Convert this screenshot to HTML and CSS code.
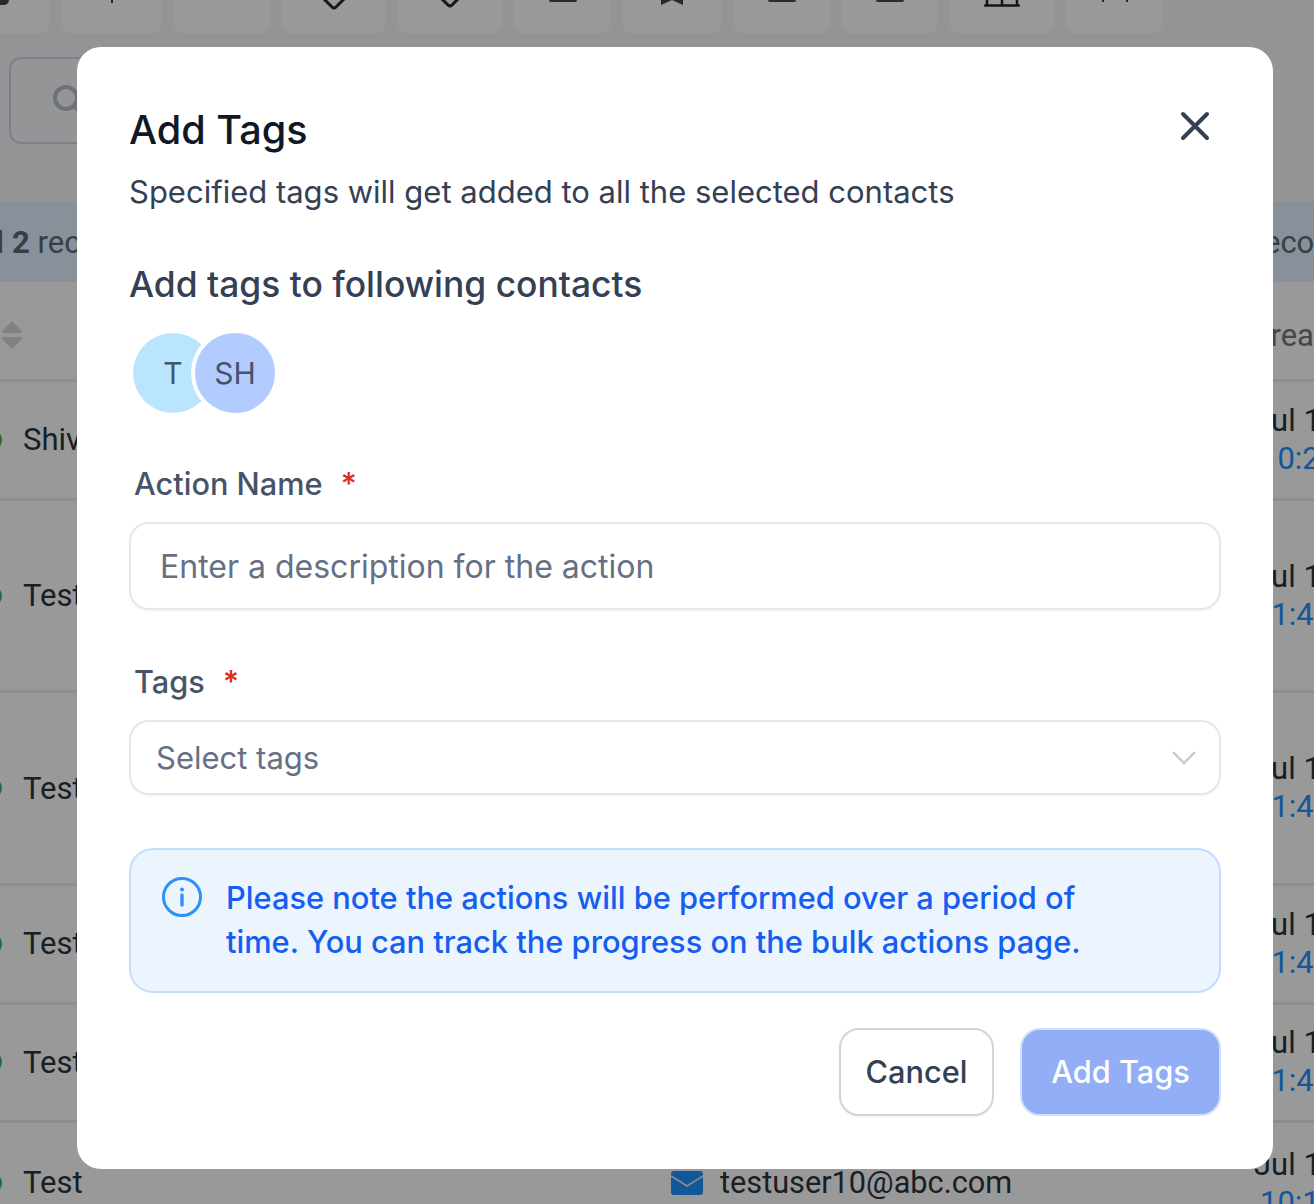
FILE: index.html
```html
<!DOCTYPE html>
<html lang="en">
<head>
  <meta charset="UTF-8">
  <meta name="viewport" content="width=device-width, initial-scale=1.0">
  <title>Contacts - Add Tags</title>
  <link rel="stylesheet" href="styles.css">
</head>
<body>
  <div class="page">
    <div class="toolbar">
      <div class="tool tool-0"><span class="frag-blob"></span></div>
      <div class="tool tool-1"><span class="frag-tick"></span></div>
      <div class="tool tool-2"></div>
      <div class="tool tool-3">
        <svg width="24" height="10" viewBox="0 0 24 10"><path d="M1 -2 L10 7 Q12 9 14 7 L23 -2" fill="none" stroke="#1f2a3c" stroke-width="3"/></svg>
      </div>
      <div class="tool tool-4">
        <svg width="20" height="8" viewBox="0 0 20 8"><path d="M1 -2 L8 5 Q10 7 12 5 L19 -2" fill="none" stroke="#1f2a3c" stroke-width="3"/></svg>
      </div>
      <div class="tool tool-5"><span class="frag-bar"></span></div>
      <div class="tool tool-6">
        <svg width="22" height="5" viewBox="0 0 22 5"><path d="M0 0 H22 V5 L11 0 L0 5 Z" fill="#3a4654"/></svg>
      </div>
      <div class="tool tool-7"><span class="frag-bar"></span></div>
      <div class="tool tool-8"><span class="frag-bar"></span></div>
      <div class="tool tool-9">
        <svg width="36" height="7" viewBox="0 0 36 7"><path d="M3 0 V5 M18 0 V5 M33 0 V5 M1 5.5 H35" fill="none" stroke="#1f2630" stroke-width="2.5" stroke-linecap="round"/></svg>
      </div>
      <div class="tool tool-10">
        <svg width="28" height="3" viewBox="0 0 28 3"><path d="M1 0 H3 V2 H1 Z M25 0 H27 V2 H25 Z" fill="#3a4654"/></svg>
      </div>
    </div>

    <div class="search">
      <svg class="search-icon" width="32" height="32" viewBox="0 0 32 32"><circle cx="14" cy="14" r="11" fill="none" stroke="#b8bcc4" stroke-width="4"/><path d="M22 22 L30 30" stroke="#b8bcc4" stroke-width="4"/></svg>
    </div>

    <div class="banner">
      <span class="banner-left">All <b>2</b> records</span>
      <span class="banner-right">records</span>
    </div>

    <div class="table-head">
      <svg class="sort" width="22" height="30" viewBox="0 0 24 32" preserveAspectRatio="none"><path d="M12 1 L23 12 Q23 14 21 14 H3 Q1 14 1 12 Z M3 18 H21 Q23 18 23 20 L12 31 L1 20 Q1 18 3 18 Z" fill="#d6d8dc"/></svg>
      <span class="head-date">Created</span>
    </div>

    <div class="row row-short">
      <div class="name"><span class="dot dot-green"></span>Shivam</div>
      <div class="date">Jul 19<span class="time">10:25</span></div>
    </div>
    <div class="row row-tall">
      <div class="name"><span class="dot dot-teal"></span>Test</div>
      <div class="date">Jul 19<span class="time time-wide">01:45</span></div>
    </div>
    <div class="row row-tall">
      <div class="name"><span class="dot dot-teal"></span>Test</div>
      <div class="date">Jul 19<span class="time time-wide">01:45</span></div>
    </div>
    <div class="row row-short">
      <div class="name"><span class="dot dot-teal"></span>Test</div>
      <div class="date">Jul 19<span class="time time-wide">01:45</span></div>
    </div>
    <div class="row row-short">
      <div class="name"><span class="dot dot-teal"></span>Test</div>
      <div class="date">Jul 19<span class="time time-wide">01:45</span></div>
    </div>
    <div class="row row-last">
      <div class="name"><span class="dot dot-teal"></span>Test</div>
      <div class="email">
        <svg width="32" height="24" viewBox="0 0 32 24"><rect width="32" height="24" rx="3" fill="#2190ff"/><path d="M0 5 L16 15 L32 5" fill="none" stroke="#e8e8e8" stroke-width="1.6"/></svg>
        testuser10@abc.com
      </div>
      <div class="date date-last">Jul 19<span class="time">10:15</span></div>
    </div>
  </div>

  <div class="overlay">
    <div class="modal">
      <div class="modal-head">
        <h2>Add Tags</h2>
        <svg class="close" width="32" height="32" viewBox="0 0 32 32"><path d="M4 4 L28 28 M28 4 L4 28" fill="none" stroke="#344054" stroke-width="4" stroke-linecap="round"/></svg>
      </div>
      <p class="subtitle">Specified tags will get added to all the selected contacts</p>

      <h3>Add tags to following contacts</h3>
      <div class="avatars">
        <div class="avatar avatar-t">T</div>
        <div class="avatar avatar-sh">SH</div>
      </div>

      <label class="field-label">Action Name <span class="req">*</span></label>
      <div class="input">Enter a description for the action</div>

      <label class="field-label field-tags">Tags <span class="req">*</span></label>
      <div class="select">
        <span>Select tags</span>
        <svg width="24" height="14" viewBox="0 0 24 14"><path d="M1 1 L12 12 L23 1" fill="none" stroke="#c8c8c8" stroke-width="2.4"/></svg>
      </div>

      <div class="notice">
        <svg width="40" height="40" viewBox="0 0 40 40"><circle cx="20" cy="20" r="18.5" fill="none" stroke="#2e90fa" stroke-width="3"/><path d="M20 18 V28" stroke="#2e90fa" stroke-width="3.4" stroke-linecap="round"/><circle cx="20" cy="12.5" r="2" fill="#2e90fa"/></svg>
        <p>Please note the actions will be performed over a period of time. You can track the progress on the bulk actions page.</p>
      </div>

      <div class="actions">
        <button class="btn btn-cancel">Cancel</button>
        <button class="btn btn-primary">Add Tags</button>
      </div>
    </div>
  </div>
</body>
</html>
```
FILE: styles.css
```css
* {
  box-sizing: border-box;
}
html, body {
  margin: 0;
  padding: 0;
  height: 1204px;
  overflow: hidden;
}
body {
  font-family: Roboto, "Liberation Sans", sans-serif;
  background-color: #f5f7fa;
  color: #2b343c;
}
.page {
  width: 1314px;
  height: 1204px;
  overflow: hidden;
}

/* toolbar, scrolled mostly out of view */
.toolbar {
  display: flex;
  height: 34px;
  gap: 11px;
  margin-left: -10px;
}
.tool {
  height: 34px;
  background: #ffffff;
  border-radius: 0 0 12px 12px;
  display: flex;
  justify-content: center;
  align-items: flex-start;
}
.tool svg {
  display: block;
}
.tool-0 { width: 60px; justify-content: flex-start; padding-left: 2px; }
.tool-1 { width: 101px; }
.tool-2 { width: 97px; }
.tool-3 { width: 105px; }
.tool-4 { width: 106px; }
.tool-5 { width: 97px; }
.tool-6 { width: 100px; }
.tool-7 { width: 97px; }
.tool-8 { width: 97px; }
.tool-9 { width: 106px; }
.tool-10 { width: 97px; }
.frag-blob {
  width: 17px;
  height: 5px;
  background: #3a4654;
  border-radius: 0 0 6px 0;
}
.frag-tick {
  width: 2px;
  height: 3px;
  background: #3a4654;
}
.frag-bar {
  width: 28px;
  height: 2px;
  background: #3e4a56;
  border-radius: 0 0 2px 2px;
}

.search {
  width: 400px;
  height: 87px;
  margin: 23px 0 0 9px;
  border: 2px solid #d0d5dd;
  border-radius: 12px;
  background: #f7f8fa;
  padding: 25px 0 0 41px;
}
.search-icon {
  display: block;
}

.banner {
  height: 80px;
  margin-top: 58px;
  background: #e3f1ff;
  display: flex;
  justify-content: space-between;
  align-items: center;
  font-size: 31px;
  color: #5b6a78;
  white-space: nowrap;
}
.banner-left {
  margin-left: -31px;
}
.banner-right {
  margin-right: -44px;
}

.table-head {
  height: 100px;
  padding-top: 9px;
  background: #ffffff;
  border-bottom: 3px solid #eaecf0;
  display: flex;
  justify-content: space-between;
  align-items: center;
  font-size: 31px;
  color: #6b7783;
}
.sort {
  margin-left: 1px;
}
.head-date {
  margin-right: -44px;
}

.row {
  display: flex;
  align-items: center;
  justify-content: space-between;
  background: #ffffff;
  border-bottom: 3px solid #eaecf0;
  font-size: 31px;
  white-space: nowrap;
}
.row-short { height: 118.75px; }
.row-tall { height: 192.5px; }
.row-last {
  height: 84px;
  border-bottom: 0;
  align-items: flex-start;
}
.name {
  display: flex;
  align-items: center;
  gap: 21px;
  margin-left: -20px;
}
.row-last .name {
  width: 691px;
  margin-top: 41px;
}
.dot {
  width: 22px;
  height: 22px;
  border-radius: 50%;
}
.dot-green { background: #4ca84f; }
.dot-teal { background: #3fae9a; }
.date {
  width: 60px;
  line-height: 38px;
  color: #2b343c;
}
.date-last {
  margin-top: 23px;
}
.time {
  display: block;
  color: #2190ff;
  margin-left: 6px;
}
.time-wide {
  margin-left: 0;
}
.email {
  display: flex;
  align-items: center;
  gap: 17px;
  margin-top: 41px;
  margin-right: auto;
  font-size: 30.7px;
  line-height: 38px;
}

/* modal */
.overlay {
  position: fixed;
  top: 0;
  left: 0;
  right: 0;
  bottom: 0;
  background: rgba(0, 0, 0, 0.4);
  padding: 47px 0 0 77px;
}
.modal {
  width: 1196px;
  height: 1122px;
  background: #ffffff;
  border-radius: 24px;
  padding: 61px 52px 0 52px;
  font-family: Inter, "Liberation Sans", sans-serif;
}
.modal-head {
  display: flex;
  justify-content: space-between;
  align-items: flex-start;
  padding-right: 10px;
}
.modal-head h2 {
  margin: 0;
  font-size: 39.6px;
  line-height: 44px;
  font-weight: 500;
  color: #101828;
}
.close {
  margin-top: 2px;
}
.subtitle {
  margin: 22px 0 0;
  font-size: 31px;
  line-height: 36px;
  color: #344054;
}
.modal h3 {
  margin: 55px 0 0;
  font-size: 35.4px;
  line-height: 40px;
  font-weight: 500;
  color: #344054;
}
.avatars {
  display: flex;
  margin: 28px 0 0 4px;
}
.avatar {
  width: 80px;
  height: 80px;
  border-radius: 50%;
  display: flex;
  align-items: center;
  justify-content: center;
  font-size: 30px;
  color: #475467;
}
.avatar-t {
  background: #b9e6fe;
}
.avatar-sh {
  width: 88px;
  height: 88px;
  margin: -4px 0 0 -22px;
  background: #b2ccff;
  border: 4px solid #ffffff;
}
.field-label {
  display: block;
  margin: 48px 0 0 5px;
  font-size: 30.7px;
  line-height: 38px;
  font-weight: 500;
  color: #475467;
}
.field-tags {
  margin-top: 53px;
}
.req {
  color: #d92d20;
  margin-left: 10px;
}
.input {
  height: 88px;
  margin-top: 19px;
  border: 2px solid #e4e7ec;
  border-radius: 20px;
  padding: 0 29px;
  display: flex;
  align-items: center;
  font-size: 32px;
  color: #667085;
  box-shadow: 0 1px 2px rgba(16, 24, 40, 0.05);
}
.select {
  height: 75px;
  margin-top: 19px;
  border: 2px solid #e4e7ec;
  border-radius: 20px;
  padding: 0 23px 0 25px;
  display: flex;
  justify-content: space-between;
  align-items: center;
  font-size: 31px;
  color: #667085;
  box-shadow: 0 1px 2px rgba(16, 24, 40, 0.05);
}
.notice {
  display: flex;
  gap: 24px;
  height: 145px;
  margin-top: 53px;
  padding: 26px 31px;
  background: #ecf4fe;
  border: 2px solid #c3ddfd;
  border-radius: 24px;
}
.notice svg {
  flex: none;
  margin-top: 1px;
}
.notice p {
  margin: 0;
  font-size: 30.8px;
  line-height: 44px;
  font-weight: 500;
  color: #155eef;
  width: 880px;
}
.actions {
  display: flex;
  justify-content: flex-end;
  gap: 26px;
  margin-top: 35px;
}
.btn {
  height: 88px;
  padding-bottom: 3px;
  border-radius: 20px;
  font-family: Inter, "Liberation Sans", sans-serif;
  font-size: 30.7px;
  font-weight: 500;
}
.btn-cancel {
  width: 155px;
  background: #ffffff;
  border: 2px solid #d0d5dd;
  color: #344054;
  box-shadow: 0 1px 2px rgba(16, 24, 40, 0.05);
}
.btn-primary {
  width: 201px;
  background: #91aef7;
  border: 2px solid #d1e0ff;
  color: #ffffff;
}
```
